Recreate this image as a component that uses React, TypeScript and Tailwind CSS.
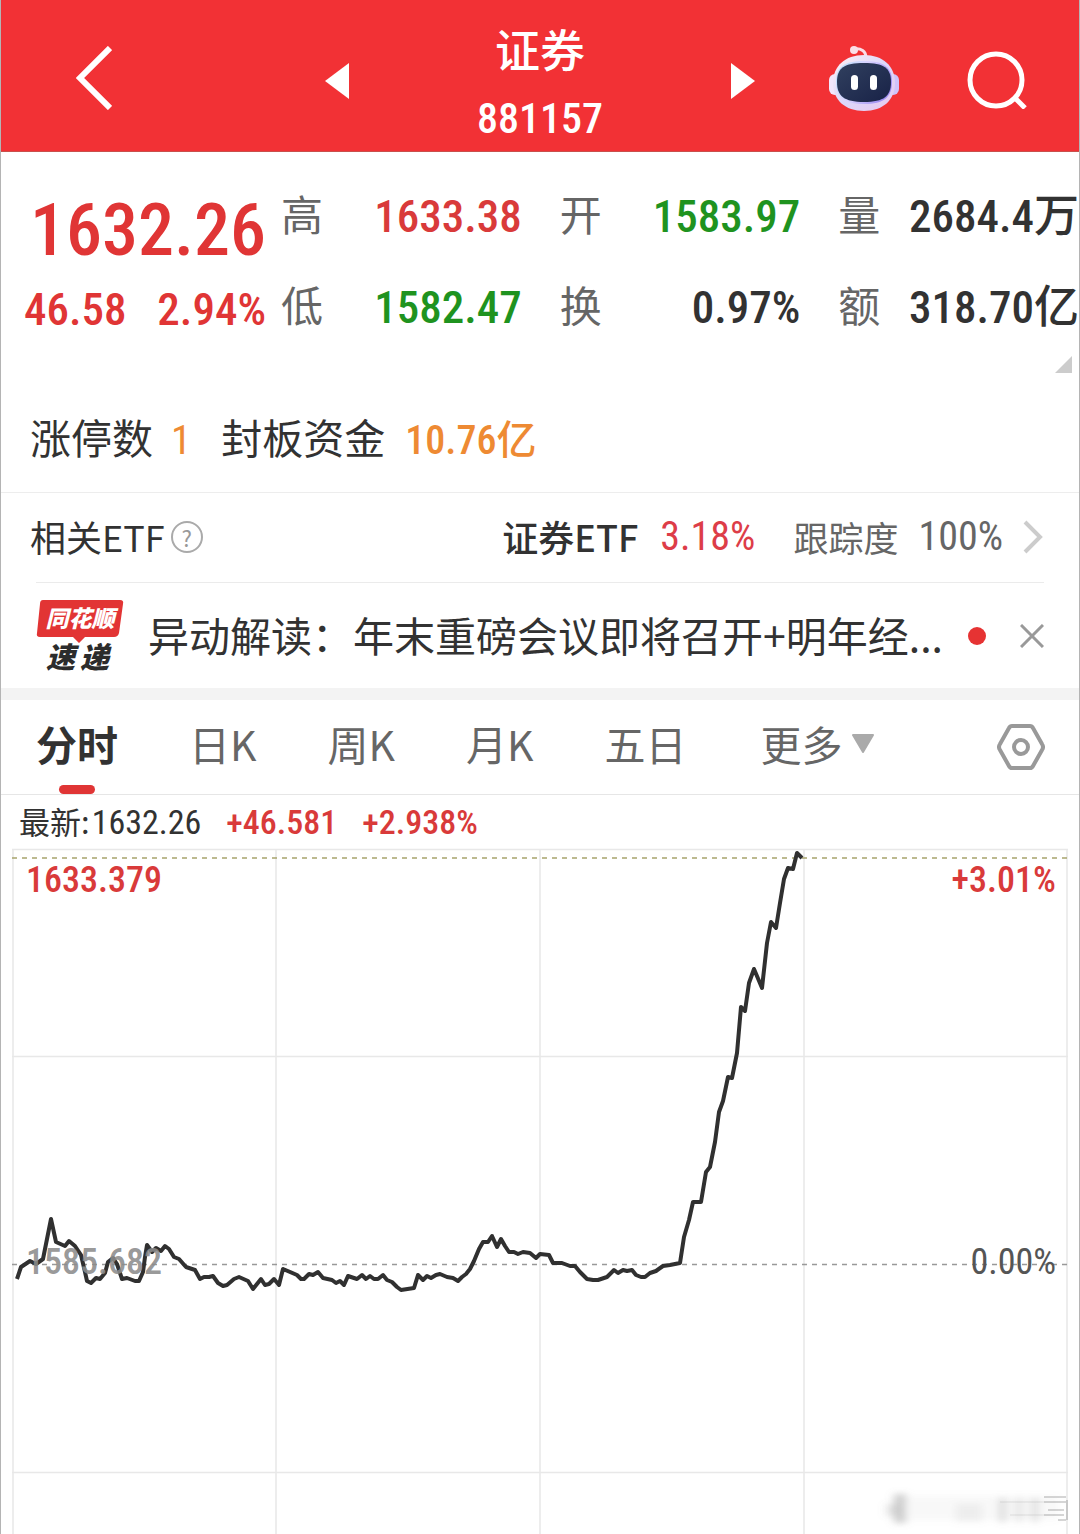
import type { ReactNode } from "react";

interface Quote {
  label: string;
  value: string;
  color: string;
}

const quotes: Quote[] = [
  { label: "高", value: "1633.38", color: "text-[#d93a3a]" },
  { label: "开", value: "1583.97", color: "text-[#1f931f]" },
  { label: "量", value: "2684.4万", color: "text-[#323232]" },
  { label: "低", value: "1582.47", color: "text-[#1f931f]" },
  { label: "换", value: "0.97%", color: "text-[#323232]" },
  { label: "额", value: "318.70亿", color: "text-[#323232]" },
];

const tabs = ["分时", "日K", "周K", "月K", "五日"];

const pricePoints = [
  "17,1279 21,1267 30,1261 36,1264 43,1259 51,1219 56,1242 65,1246 69,1241 75,1246 81,1255 85,1272 87,1281 91,1283 96,1278 100,1279 105,1273 108,1262 113,1258 117,1264 122,1279 127,1278 135,1281 139,1281",
  "143,1272 145,1257 147,1245 152,1252 156,1248 161,1251 165,1246 169,1249 174,1257 179,1259 186,1267 195,1270 200,1279 204,1277 209,1277 213,1276 218,1283 223,1286 227,1285 234,1279 239,1277 248,1281 253,1289",
  "261,1279 265,1285 269,1284 274,1279 279,1285 283,1269 297,1275 301,1279 304,1279 309,1274 313,1275 318,1272 323,1278 332,1280 336,1283 340,1281 344,1285 348,1276 357,1279 362,1275 366,1279 370,1276 374,1279",
  "378,1279 383,1275 387,1280 392,1282 397,1287 401,1290 414,1288 418,1275 423,1280 427,1276 431,1278 436,1275 440,1274 447,1277 453,1278 458,1281 462,1277 466,1274 470,1269 474,1261 479,1249 483,1242 488,1242",
  "492,1236 497,1247 501,1239 505,1246 509,1252 514,1252 518,1254 523,1252 530,1253 536,1258 540,1254 549,1255 553,1263 562,1263 570,1266 575,1266 580,1272 587,1279 593,1280 598,1280 607,1277 614,1270 618,1273",
  "623,1270 627,1271 632,1270 636,1275 641,1277 645,1277 650,1273 656,1271 663,1266 670,1265 680,1263 684,1237 689,1220 693,1202 701,1202 706,1172 710,1167 715,1142 719,1112 723,1101 728,1077 732,1078 737,1053",
  "741,1007 745,1011 749,983 754,969 762,988 767,943 771,922 776,928 780,903 784,879 788,868 793,869 797,853 802,858",
].join(" ");

function IconButton({ label, children }: { label: string; children: ReactNode }) {
  return (
    <button type="button" aria-label={label} className="block shrink-0">
      {children}
    </button>
  );
}

function RobotIcon() {
  return (
    <svg width="72" height="68" viewBox="0 0 72 68">
      <defs>
        <linearGradient id="shell" x1="0" y1="0" x2="1" y2="1">
          <stop offset="0" stopColor="#fff0f4" />
          <stop offset="0.5" stopColor="#dcd8fb" />
          <stop offset="1" stopColor="#e8c8ee" />
        </linearGradient>
        <linearGradient id="rim" x1="0" y1="0" x2="1" y2="0.4">
          <stop offset="0" stopColor="#b5e2fa" />
          <stop offset="0.5" stopColor="#d9d3ff" />
          <stop offset="1" stopColor="#9f90f2" />
        </linearGradient>
        <linearGradient id="visor" x1="0" y1="0" x2="1" y2="1">
          <stop offset="0" stopColor="#31405f" />
          <stop offset="1" stopColor="#182247" />
        </linearGradient>
      </defs>
      <path d="M26 4c7-1 12 2 12 9" fill="none" stroke="#fbdce6" strokeWidth="3" />
      <circle cx="26" cy="5" r="4" fill="#fbdfe8" />
      <rect x="1" y="29" width="12" height="21" rx="6" fill="#f3e6fb" />
      <rect x="59" y="29" width="12" height="21" rx="6" fill="#cfc3fa" />
      <path
        d="M36 10c19 0 31 11 31 28S55 66 36 66 5 55 5 38s12-28 31-28z"
        fill="url(#shell)"
      />
      <path
        d="M36 16c20 0 28 6 28 21S56 59 36 59 8 52 8 37s8-21 28-21z"
        fill="url(#rim)"
      />
      <path
        d="M36 18c20 0 27 5 27 19s-7 20-27 20S9 51 9 37s7-19 27-19z"
        fill="url(#visor)"
      />
      <rect x="23" y="30" width="7" height="15" rx="3.5" fill="#fff" />
      <rect x="42" y="30" width="7" height="15" rx="3.5" fill="#fff" />
    </svg>
  );
}

function Header() {
  return (
    <header className="grid grid-cols-[324fr_430fr_324fr] items-center border-b border-[#c9504c] bg-[#f23135] text-white">
      <div className="pt-1 pl-[75px]">
        <IconButton label="返回">
          <svg width="36" height="64" viewBox="0 0 36 64" fill="none" stroke="#fff" strokeWidth="6">
            <path d="M34 2L4 32l30 30" />
          </svg>
        </IconButton>
      </div>
      <div className="flex items-center justify-between">
        <div className="pt-[10px]">
          <IconButton label="上一个">
            <svg width="24" height="36" viewBox="0 0 24 36" fill="#fff">
              <path d="M24 0v36L0 18z" />
            </svg>
          </IconButton>
        </div>
        <h1 className="pt-[19px] text-center font-medium">
          <span className="block text-[45px] leading-[67px]">证券</span>
          <span className="block text-[42px] leading-[65px]">881157</span>
        </h1>
        <div className="pt-[10px]">
          <IconButton label="下一个">
            <svg width="24" height="36" viewBox="0 0 24 36" fill="#fff">
              <path d="M0 0v36l24-18z" />
            </svg>
          </IconButton>
        </div>
      </div>
      <div className="flex items-center justify-between pt-[6px] pr-[52px] pl-[73px]">
        <IconButton label="智能助手">
          <RobotIcon />
        </IconButton>
        <IconButton label="搜索">
          <svg width="60" height="60" viewBox="0 0 60 60" fill="none" stroke="#fff" strokeWidth="5">
            <circle cx="29" cy="31" r="26" />
            <path d="M47 48l11 11" />
          </svg>
        </IconButton>
      </div>
    </header>
  );
}

function QuotePanel() {
  return (
    <section className="border-b border-[#ededed] pt-[19px] pb-[21px]">
      <div className="flex">
        <div className="w-[280px] shrink-0 pr-[15px] pl-[23px] font-medium text-[#e03535]">
          <p className="text-right text-[72px] leading-[120px]">1632.26</p>
          <p className="flex justify-between text-[45px] leading-[38px]">
            <span>46.58</span>
            <span>2.94%</span>
          </p>
        </div>
        <dl className="grid flex-1 grid-cols-3 gap-x-[38px] text-[45px] leading-[91px] whitespace-nowrap">
          {quotes.map((q) => (
            <div key={q.label} className="flex justify-between">
              <dt className="text-[42px] text-[#666]">{q.label}</dt>
              <dd className={`font-medium ${q.color}`}>{q.value}</dd>
            </div>
          ))}
        </dl>
      </div>
      <div className="mt-[3px] flex justify-end pr-[7px]">
        <svg width="17" height="17" viewBox="0 0 17 17" fill="#ccc">
          <path d="M17 0v17H0z" />
        </svg>
      </div>
      <p className="mt-[37px] flex pl-[29px] text-[41px] leading-[61px] text-[#323232]">
        <span>涨停数</span>
        <span className="ml-[18px] text-[#ee8a33]">1</span>
        <span className="ml-[30px]">封板资金</span>
        <span className="ml-5 text-[40px] font-medium text-[#ee8a33]">10.76亿</span>
      </p>
    </section>
  );
}

function EtfRow() {
  return (
    <section className="flex items-center pr-[36px] pb-[2px] pl-[29px] font-['Noto_Sans_CJK_SC',sans-serif] text-[36px] leading-[87px] text-[#323232]">
      <h2>相关ETF</h2>
      <button
        type="button"
        aria-label="说明"
        className="ml-[6px] flex size-8 items-center justify-center rounded-full border-2 border-[#aaa] text-[22px] leading-none text-[#999]"
      >
        ?
      </button>
      <a href="#etf" className="ml-auto flex items-center">
        <span className="font-medium">证券ETF</span>
        <span className="ml-[22px] font-['Roboto_Condensed',sans-serif] text-[40px] text-[#dd3d48]">3.18%</span>
        <span className="ml-[38px] text-[35px] text-[#666]">跟踪度</span>
        <span className="ml-5 font-['Roboto_Condensed',sans-serif] text-[40px] text-[#666]">100%</span>
        <svg className="ml-5" width="20" height="34" viewBox="0 0 20 34" fill="none" stroke="#ccc" strokeWidth="4">
          <path d="M2 2l15 15L2 32" />
        </svg>
      </a>
    </section>
  );
}

function NewsLogo() {
  return (
    <svg className="shrink-0" width="88" height="90" viewBox="0 -8 88 90" role="img" aria-label="同花顺速递">
      <path d="M7 1h77q4 0 3 4l-4 29q-1 4-5 4H49l-6 6-6-6H4q-4 0-3-4L4 5q0-4 3-4z" fill="#e23434" />
      <text x="44" y="28" textAnchor="middle" fontSize="23" fontWeight="900" fontStyle="italic" fill="#fff">
        同花顺
      </text>
      <text x="10" y="69" fontSize="29" fontWeight="900" fontStyle="italic" fill="#2c2c2c">
        速
      </text>
      <text x="44" y="69" fontSize="29" fontWeight="900" fontStyle="italic" fill="#2c2c2c">
        递
      </text>
    </svg>
  );
}

function NewsRow() {
  return (
    <section className="mx-[35px] flex items-center border-t border-[#ebebeb] text-[#323232]">
      <NewsLogo />
      <a
        href="#news"
        className="ml-6 flex-1 pb-[2px] font-['Noto_Sans_CJK_SC',sans-serif] text-[41px] leading-[103px] whitespace-nowrap"
      >
        异动解读：年末重磅会议即将召开+明年经...
      </a>
      <span className="size-[18px] shrink-0 rounded-full bg-[#e63333]" />
      <button type="button" aria-label="关闭" className="ml-[34px] shrink-0">
        <svg width="24" height="24" viewBox="0 0 24 24" fill="none" stroke="#999" strokeWidth="3">
          <path d="M1 1l22 22M23 1L1 23" />
        </svg>
      </button>
    </section>
  );
}

function ChartTabs() {
  return (
    <nav className="flex items-center border-t-[12px] border-b border-t-[#f3f3f3] border-b-[#e6e6e6] pr-[34px] pl-[35px] font-['Noto_Sans_CJK_SC',sans-serif] text-[41px] leading-[86px] text-[#666]">
      <div className="flex gap-[71px]">
        {tabs.map((tab, i) => (
          <button
            key={tab}
            type="button"
            className={i === 0 ? "relative pb-2 font-bold text-[#323232]" : "pb-2"}
          >
            {tab}
            {i === 0 && (
              <span className="absolute bottom-0 left-1/2 h-[9px] w-9 -translate-x-1/2 rounded-full bg-[#e03535]" />
            )}
          </button>
        ))}
        <button type="button" className="flex items-center gap-[9px] pb-2 pl-[3px]">
          更多
          <svg width="22" height="19" viewBox="0 0 22 19" fill="#aaa" stroke="#aaa" strokeWidth="2" strokeLinejoin="round">
            <path d="M1 1h20L11 18z" />
          </svg>
        </button>
      </div>
      <button type="button" aria-label="设置" className="ml-auto">
        <svg width="48" height="46" viewBox="0 0 48 46" fill="none" stroke="#999" strokeWidth="4" strokeLinejoin="round">
          <path d="M15 2h18q2 0 3 2l9 16q2 3 0 6l-9 16q-1 2-3 2H15q-2 0-3-2L3 26q-2-3 0-6l9-16q1-2 3-2z" />
          <circle cx="24" cy="23" r="7" />
        </svg>
      </button>
    </nav>
  );
}

function PriceChart() {
  return (
    <svg className="block w-full" viewBox="1 848 1078 686" role="img" aria-label="分时走势图">
      <defs>
        <filter id="soft" x="-20%" y="-50%" width="140%" height="200%">
          <feGaussianBlur stdDeviation="4 3" />
        </filter>
      </defs>

      {/* grid */}
      <g stroke="#e8e8e8" strokeWidth="1.5">
        <path d="M12 849.5H1068M12 1056.5H1068M12 1472.5H1068" />
        <path d="M13 849V1534M276 849V1534M540 849V1534M804 849V1534M1067 849V1534" />
      </g>
      <path d="M12 858H1068" stroke="#a8a46c" strokeWidth="1.5" strokeDasharray="5 5" />
      <path d="M12 1264.5H1068" stroke="#999" strokeWidth="1.5" strokeDasharray="5 5" />

      <polyline
        points={pricePoints}
        fill="none"
        stroke="#303030"
        strokeWidth="4"
        strokeLinejoin="round"
      />

      {/* axis labels */}
      <g fontSize="36" fontWeight="500">
        <text x="26" y="892" fill="#d93a3a">1633.379</text>
        <text x="1056" y="892" textAnchor="end" fill="#d93a3a">+3.01%</text>
        <text x="26" y="1274" fill="#8c8c8c" fillOpacity="0.9">1585.682</text>
        <text x="1056" y="1274" textAnchor="end" fill="#555" fontWeight="400">0.00%</text>
      </g>

      {/* faded watermark */}
      <g filter="url(#soft)" fill="#888">
        <rect x="886" y="1504" width="12" height="12" opacity="0.2" />
        <rect x="894" y="1494" width="12" height="29" opacity="0.4" />
        <rect x="908" y="1496" width="150" height="24" opacity="0.06" />
        <rect x="956" y="1504" width="26" height="18" opacity="0.1" />
        <rect x="1000" y="1498" width="5" height="24" opacity="0.35" />
        <rect x="1016" y="1498" width="6" height="24" opacity="0.2" />
        <rect x="1032" y="1498" width="6" height="24" opacity="0.25" />
      </g>
      <g stroke="#777" strokeWidth="1.5">
        <path d="M1000 1502H1044M1010 1515H1044" opacity="0.12" />
        <path d="M1044 1497H1066M1044 1502H1066M1048 1510H1064M1044 1515H1064M1058 1520H1066M1067 1500V1520" opacity="0.4" />
      </g>
    </svg>
  );
}

export default function App() {
  return (
    <main className="border-x border-[#b4b4b4] bg-white font-['Roboto_Condensed','Noto_Sans_CJK_SC',sans-serif]">
      <Header />
      <QuotePanel />
      <EtfRow />
      <NewsRow />
      <ChartTabs />
      <p className="flex items-baseline pl-[18px] text-[34px] leading-[51px] text-[#323232]">
        <span className="font-['Noto_Sans_CJK_SC',sans-serif] text-[31px]">最新:</span>
        <span className="ml-[2px]">1632.26</span>
        <span className="ml-[25px] font-medium text-[#d93a3a]">+46.581</span>
        <span className="ml-[25px] font-medium text-[#d93a3a]">+2.938%</span>
      </p>
      <PriceChart />
    </main>
  );
}
